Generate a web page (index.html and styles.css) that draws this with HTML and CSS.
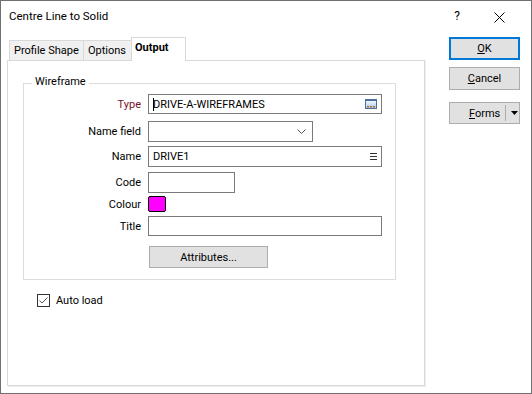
FILE: index.html
```html
<!DOCTYPE html>
<html>
<head>
    <title>Centre Line to Solid</title>
    <link rel="stylesheet" href="styles.css">
</head>
<body>
    <div class="window">
        <div class="titlebar">
            <span class="title">Centre Line to Solid</span>
            <span class="help">?</span>
            <svg class="close" width="11" height="11" viewBox="0 0 11 11">
                <path d="M0.5 0.5 L10.5 10.5 M10.5 0.5 L0.5 10.5" stroke="#000" stroke-width="1" fill="none"/>
            </svg>
        </div>
        <div class="content">
            <div class="left">
                <div class="tabs">
                    <div class="tab tab-profile">Profile Shape</div>
                    <div class="tab tab-options">Options</div>
                    <div class="tab active">Output</div>
                </div>
                <div class="panel">
                    <div class="group">
                        <span class="legend">Wireframe</span>

                        <div class="row row-type">
                            <span class="label type">Type</span>
                            <div class="field wide">
                                <span class="caret"></span>
                                <span class="value">DRIVE-A-WIREFRAMES</span>
                                <svg class="browse" width="12" height="10" viewBox="0 0 12 10">
                                    <defs>
                                        <linearGradient id="bg" x1="0" y1="0" x2="0" y2="1">
                                            <stop offset="0" stop-color="#ffffff"/>
                                            <stop offset="1" stop-color="#a9c6ea"/>
                                        </linearGradient>
                                    </defs>
                                    <rect x="0.5" y="0.5" width="11" height="9" fill="url(#bg)" stroke="#4d6f9c"/>
                                    <rect x="0.5" y="0.5" width="11" height="1.5" fill="#4d6f9c"/>
                                    <rect x="2" y="7" width="2" height="1.5" fill="#a0702a"/>
                                    <rect x="5" y="7" width="2" height="1.5" fill="#a0702a"/>
                                    <rect x="8" y="7" width="2" height="1.5" fill="#a0702a"/>
                                </svg>
                            </div>
                        </div>

                        <div class="row row-namefield">
                            <span class="label">Name field</span>
                            <div class="field combo">
                                <svg class="chevron" width="9" height="5" viewBox="0 0 9 5">
                                    <path d="M0.5 0.5 L4.5 4.5 L8.5 0.5" stroke="#555" stroke-width="1" fill="none"/>
                                </svg>
                            </div>
                        </div>

                        <div class="row row-name">
                            <span class="label">Name</span>
                            <div class="field wide">
                                <span class="value">DRIVE1</span>
                                <svg class="menu" width="7" height="7" viewBox="0 0 7 7">
                                    <path d="M0 0.5 H7 M0 3.5 H7 M0 6.5 H7" stroke="#333" stroke-width="1"/>
                                </svg>
                            </div>
                        </div>

                        <div class="row row-code">
                            <span class="label">Code</span>
                            <div class="field short"></div>
                        </div>

                        <div class="row row-colour">
                            <span class="label">Colour</span>
                            <div class="swatch"></div>
                        </div>

                        <div class="row row-title">
                            <span class="label">Title</span>
                            <div class="field wide"></div>
                        </div>

                        <div class="row row-attr">
                            <span class="label"></span>
                            <button class="btn attr">Attributes...</button>
                        </div>
                    </div>

                    <div class="autoload">
                        <svg class="check" width="13" height="13" viewBox="0 0 13 13">
                            <rect x="0.5" y="0.5" width="12" height="12" fill="#fff" stroke="#333"/>
                            <path d="M2.5 6.5 L5 9 L10.5 3.5" stroke="#555" stroke-width="1" fill="none"/>
                        </svg>
                        <span>Auto load</span>
                    </div>
                </div>
            </div>

            <div class="buttons">
                <button class="btn side default"><u>O</u>K</button>
                <button class="btn side cancel"><u>C</u>ancel</button>
                <div class="btn side forms">
                    <span class="forms-text"><u>F</u>orms</span>
                    <span class="divider"></span>
                    <svg class="arrow" width="7" height="4" viewBox="0 0 7 4">
                        <path d="M0 0 H7 L3.5 4 Z" fill="#000"/>
                    </svg>
                </div>
            </div>
        </div>
    </div>
</body>
</html>
```

FILE: styles.css
```css
body {
    margin: 0;
    font-family: Roboto, "Noto Sans", sans-serif;
    font-size: 11px;
    color: #000;
    background: #fff;
}
.window {
    width: 532px;
    height: 394px;
    box-sizing: border-box;
    border: 1px solid #707070;
    background: #fff;
}
.titlebar {
    height: 36px;
    display: flex;
    align-items: flex-start;
    padding-top: 8px;
    box-sizing: border-box;
}
.title {
    margin-left: 8px;
    flex: 1;
    font-size: 11.5px;
}
.help {
    margin-right: 34px;
    font-size: 12px;
}
.close {
    margin-top: 3px;
    margin-right: 26px;
}
.content {
    display: flex;
    padding-left: 6px;
}
.left {
    width: 418px;
}
.tabs {
    display: flex;
    align-items: flex-end;
    height: 23px;
    padding-left: 2px;
    position: relative;
    z-index: 1;
}
.tab {
    height: 20px;
    box-sizing: border-box;
    border: 1px solid #d9d9d9;
    border-bottom: none;
    background: #f0f0f0;
    padding: 1px 0 0 4px;
    margin-left: -1px;
    line-height: 17px;
}
.tab-profile {
    width: 75px;
    margin-left: 0;
}
.tab-options {
    width: 49px;
}
.tab.active {
    width: 55px;
    height: 24px;
    margin-bottom: -1px;
    background: #fff;
    font-weight: bold;
    padding: 1px 0 0 3px;
    line-height: 17px;
}
.panel {
    height: 326px;
    box-sizing: border-box;
    border: 1px solid #d9d9d9;
    box-shadow: 1px 1px 0 #eeeeee;
    padding-top: 22px;
}
.group {
    position: relative;
    margin-left: 15px;
    width: 373px;
    box-sizing: border-box;
    border: 1px solid #dcdcdc;
    padding: 10px 0 11px 0;
}
.legend {
    position: absolute;
    top: -9px;
    left: 8px;
    padding: 0 3px;
    background: #fff;
}
.row {
    display: flex;
    align-items: center;
}
.label {
    width: 117px;
    margin-right: 7px;
    text-align: right;
    flex-shrink: 0;
}
.label.type {
    color: #7a0f2a;
}
.field {
    height: 20px;
    box-sizing: border-box;
    border: 1px solid #7a7a7a;
    background: #fff;
    display: flex;
    align-items: center;
    padding-left: 4px;
}
.wide {
    width: 234px;
}
.combo {
    width: 165px;
    height: 21px;
    justify-content: flex-end;
    padding-right: 6px;
}
.short {
    width: 87px;
    height: 21px;
}
.value {
    flex: 1;
}
.caret {
    width: 1px;
    height: 13px;
    background: #000;
    margin-right: -1px;
}
.browse {
    margin-right: 4px;
}
.menu {
    margin-right: 4px;
}
.row-namefield { margin-top: 7px; }
.row-name { margin-top: 4px; }
.row-name .field { height: 21px; }
.row-code { margin-top: 5px; }
.row-colour { margin-top: 3px; }
.row-title { margin-top: 4px; }
.row-attr { margin-top: 10px; }
.swatch {
    width: 18px;
    height: 16px;
    box-sizing: border-box;
    border: 1px solid #000;
    border-radius: 2px;
    background: #ff00ff;
}
.btn {
    font-family: inherit;
    font-size: 11px;
    color: #000;
    background: #e1e1e1;
    border: 1px solid #adadad;
    box-sizing: border-box;
    padding: 0;
    margin: 0;
}
.attr {
    width: 119px;
    height: 22px;
    margin-left: 1px;
}
.autoload {
    display: flex;
    align-items: center;
    margin-top: 14px;
    margin-left: 29px;
    gap: 6px;
}
.check {
    display: block;
}
.buttons {
    display: flex;
    flex-direction: column;
    margin-left: 24px;
}
.side {
    width: 71px;
    height: 23px;
}
.default {
    border: 2px solid #0078d7;
}
.cancel {
    margin-top: 7px;
}
.forms {
    margin-top: 12px;
    height: 22px;
    display: flex;
    align-items: center;
}
.forms-text {
    margin-left: 19px;
    width: 36px;
}
.divider {
    width: 1px;
    height: 16px;
    background: #adadad;
}
.arrow {
    margin-left: 5px;
}
```
